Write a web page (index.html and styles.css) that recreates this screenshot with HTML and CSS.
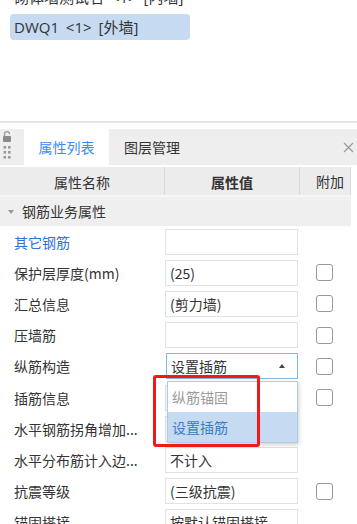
FILE: index.html
```html
<!DOCTYPE html>
<html>
<head>
<meta charset="utf-8">
<link rel="stylesheet" href="styles.css">
</head>
<body>
<div class="tree">
  <div class="tree-item">砌体墙测试名 &lt;1&gt; [内墙]</div>
  <div class="tree-item selected">DWQ1 &lt;1&gt; [外墙]</div>
</div>
<div class="splitter"></div>
<div class="panel">
  <div class="tabbar">
    <div class="grip">
      <svg width="12" height="32" viewBox="0 0 12 32">
        <path d="M3.5 5 V3.2 a2.5 2.5 0 0 1 5 0" fill="none" stroke="#9a9a9a" stroke-width="1.3"/>
        <rect x="2" y="5" width="8" height="6" rx="1" fill="#8a8a8a"/>
        <rect x="2.5" y="15" width="2.6" height="2.6" fill="#9a9a9a"/>
        <rect x="7" y="15" width="2.6" height="2.6" fill="#9a9a9a"/>
        <rect x="2.5" y="20" width="2.6" height="2.6" fill="#9a9a9a"/>
        <rect x="7" y="20" width="2.6" height="2.6" fill="#9a9a9a"/>
        <rect x="2.5" y="25" width="2.6" height="2.6" fill="#9a9a9a"/>
        <rect x="7" y="25" width="2.6" height="2.6" fill="#9a9a9a"/>
      </svg>
    </div>
    <div class="tab active">属性列表</div>
    <div class="tab">图层管理</div>
    <div class="close">
      <svg width="11" height="11" viewBox="0 0 11 11"><path d="M1 1 L10 10 M10 1 L1 10" stroke="#9a9a9a" stroke-width="1.2"/></svg>
    </div>
  </div>
  <div class="grid">
    <div class="thead">
      <div class="th c-name">属性名称</div>
      <div class="th c-val bold">属性值</div>
      <div class="th c-ext">附加</div>
    </div>
    <div class="group"><span class="tri"></span>钢筋业务属性</div>
    <div class="row">
      <div class="c-name lbl link">其它钢筋</div>
      <div class="c-val"><div class="box"></div></div>
      <div class="c-ext"></div>
    </div>
    <div class="row">
      <div class="c-name lbl">保护层厚度(mm)</div>
      <div class="c-val"><div class="box">(25)</div></div>
      <div class="c-ext"><span class="chk"></span></div>
    </div>
    <div class="row">
      <div class="c-name lbl">汇总信息</div>
      <div class="c-val"><div class="box">(剪力墙)</div></div>
      <div class="c-ext"><span class="chk"></span></div>
    </div>
    <div class="row">
      <div class="c-name lbl">压墙筋</div>
      <div class="c-val"><div class="box"></div></div>
      <div class="c-ext"><span class="chk"></span></div>
    </div>
    <div class="row">
      <div class="c-name lbl">纵筋构造</div>
      <div class="c-val drop-host">
        <div class="box select">设置插筋<span class="up"></span></div>
        <div class="droplist">
          <div class="opt">纵筋锚固</div>
          <div class="opt sel">设置插筋</div>
        </div>
        <div class="mark"></div>
      </div>
      <div class="c-ext"><span class="chk"></span></div>
    </div>
    <div class="row">
      <div class="c-name lbl">插筋信息</div>
      <div class="c-val"><div class="box"></div></div>
      <div class="c-ext"><span class="chk"></span></div>
    </div>
    <div class="row">
      <div class="c-name lbl">水平钢筋拐角增加...</div>
      <div class="c-val"><div class="box"></div></div>
      <div class="c-ext"></div>
    </div>
    <div class="row">
      <div class="c-name lbl">水平分布筋计入边...</div>
      <div class="c-val"><div class="box">不计入</div></div>
      <div class="c-ext"></div>
    </div>
    <div class="row">
      <div class="c-name lbl">抗震等级</div>
      <div class="c-val"><div class="box">(三级抗震)</div></div>
      <div class="c-ext"><span class="chk"></span></div>
    </div>
    <div class="row">
      <div class="c-name lbl">锚固搭接</div>
      <div class="c-val"><div class="box">按默认锚固搭接</div></div>
      <div class="c-ext"></div>
    </div>
  </div>
</div>
</body>
</html>
```
FILE: styles.css
```css
* { box-sizing: border-box; }
html, body { margin: 0; padding: 0; }
body {
  width: 357px;
  height: 524px;
  overflow: hidden;
  background: #fff;
  font-family: "Noto Sans CJK SC", "Noto Sans", sans-serif;
  font-size: 14px;
  color: #333;
}
.tree {
  margin-top: -16px;
  padding-left: 10px;
  height: 137px;
  display: flex;
  flex-direction: column;
  gap: 4px;
}
.tree-item {
  width: 180px;
  height: 26px;
  line-height: 26px;
  padding-left: 4px;
  border-radius: 4px;
  white-space: nowrap;
  color: #333;
  font-family: "Open Sans", "Noto Sans CJK SC", sans-serif;
  font-size: 15px;
  word-spacing: 3px;
}
.tree-item.selected { background: #c6daf1; }
.splitter {
  height: 2px;
  background: #e4e4e4;
}
.panel { margin-top: 6px; }
.tabbar {
  height: 36px;
  background: #eeeeee;
  display: flex;
  align-items: stretch;
}
.grip {
  width: 24px;
  padding-left: 1px;
  display: flex;
  align-items: center;
}
.tab {
  width: 85px;
  text-align: center;
  line-height: 36px;
  color: #333;
}
.tab.active { background: #fff; color: #3b8cf0; }
.tab + .tab { width: 86px; }
.close {
  margin-left: auto;
  width: 14px;
  display: flex;
  align-items: center;
}
.grid { width: 351px; margin-top: 2px; }
.thead {
  display: flex;
  height: 30px;
  background: #ececec;
  border-bottom: 2px solid #f6f6f6;
}
.th {
  line-height: 30px;
  text-align: center;
  color: #333;
  border-right: 1px solid #d9d9d9;
}
.bold { font-weight: bold; }
.c-name { width: 165px; flex: none; }
.c-val { width: 135px; flex: none; }
.c-ext { width: 51px; flex: none; }
.group {
  height: 29px;
  line-height: 29px;
  background: #efefef;
  padding-left: 8px;
  display: flex;
  align-items: center;
}
.tri {
  width: 0; height: 0;
  border-left: 3px solid transparent;
  border-right: 3px solid transparent;
  border-top: 4px solid #999;
  margin-right: 8px;
}
.row {
  display: flex;
  align-items: center;
  height: 31.2px;
}
.lbl { padding-left: 14px; white-space: nowrap; }
.link { color: #2f6fe0; }
.box {
  width: 133px;
  height: 26px;
  border: 1px solid #e2e2e2;
  line-height: 24px;
  padding-left: 4px;
  white-space: nowrap;
  overflow: hidden;
}
.c-ext { padding-left: 16px; display: flex; align-items: center; }
.chk {
  width: 17px; height: 17px;
  border: 1px solid #999;
  border-radius: 3px;
  background: #fff;
}
.drop-host { position: relative; }
.select {
  position: relative;
  border-color: #7fbbdc;
  width: 132px;
  margin-left: 1px;
}
.up {
  position: absolute;
  right: 12px;
  top: 10px;
  width: 0; height: 0;
  border-left: 3px solid transparent;
  border-right: 3px solid transparent;
  border-bottom: 4px solid #444;
}
.droplist {
  position: absolute;
  left: 2px;
  top: 28px;
  width: 131px;
  background: #fff;
  border: 1px solid #a9cde4;
  box-shadow: 1px 2px 4px rgba(0,0,0,0.18);
  z-index: 5;
}
.opt {
  height: 30px;
  line-height: 30px;
  padding-left: 4px;
  color: #9a9a9a;
}
.opt.sel { background: #c6daf1; color: #3c7cc4; }
.mark {
  position: absolute;
  left: -12px;
  top: 22px;
  width: 107px;
  height: 72px;
  border: 3px solid #f01a1a;
  border-radius: 3px;
  z-index: 6;
}
```
